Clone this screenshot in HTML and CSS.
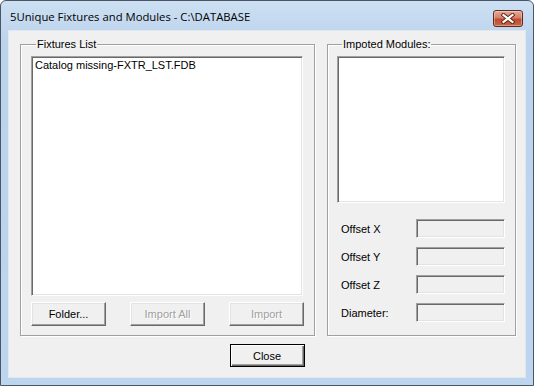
FILE: index.html
```html
<!DOCTYPE html>
<html lang="en">
<head>
  <meta charset="UTF-8">
  <title>5Unique Fixtures and Modules</title>
  <link rel="stylesheet" href="styles.css">
</head>
<body>
  <div class="window">
    <div class="titlebar">
      <span class="title">5Unique Fixtures and Modules - C:\DATABASE</span>
      <button class="close-x" aria-label="Close">
        <svg width="14" height="11" viewBox="0 0 14 11">
          <path d="M2.5 2 L11.5 9 M11.5 2 L2.5 9" stroke="#5a1e14" stroke-width="4" stroke-linecap="square"/>
          <path d="M2.5 2 L11.5 9 M11.5 2 L2.5 9" stroke="#fff" stroke-width="2.2" stroke-linecap="square"/>
        </svg>
      </button>
    </div>
    <div class="client">
      <div class="groups">
        <fieldset class="group fixtures">
          <legend>Fixtures List</legend>
          <div class="listbox big">
            <div class="item">Catalog missing-FXTR_LST.FDB</div>
          </div>
          <div class="btnrow">
            <button class="btn">Folder...</button>
            <button class="btn" disabled>Import All</button>
            <button class="btn" disabled>Import</button>
          </div>
        </fieldset>
        <fieldset class="group modules">
          <legend>Impoted Modules:</legend>
          <div class="listbox small"></div>
          <div class="fields">
            <div class="row"><span>Offset X</span><div class="field"></div></div>
            <div class="row"><span>Offset Y</span><div class="field"></div></div>
            <div class="row"><span>Offset Z</span><div class="field"></div></div>
            <div class="row"><span>Diameter:</span><div class="field"></div></div>
          </div>
        </fieldset>
      </div>
      <div class="bottom">
        <button class="btn default">Close</button>
      </div>
    </div>
  </div>
</body>
</html>
```

FILE: styles.css
```css
* { box-sizing: border-box; }
html, body { margin: 0; padding: 0; }
body {
  width: 534px; height: 386px;
  background: #fff;
  font-family: "Liberation Sans", Arial, sans-serif;
  font-size: 11px;
  color: #000;
}
.window {
  width: 534px; height: 386px;
  border: 1px solid #4a5566;
  border-radius: 6px 6px 0 0;
  background: linear-gradient(#cde0f3, #bcd3ec 40px, #bed5ee);
  padding: 0 7px 7px 7px;
  display: flex;
  flex-direction: column;
}
.titlebar {
  height: 29px;
  display: flex;
  align-items: center;
  justify-content: space-between;
  padding-left: 2px;
}
.title {
  font-family: "Open Sans", "Noto Sans", sans-serif;
  font-size: 11.3px;
  color: #000;
  margin-top: 2px;
}
.close-x {
  width: 30px; height: 17px;
  margin-top: 5px;
  margin-right: 3px;
  padding: 0;
  border: 1px solid #5d2a22;
  border-radius: 3px;
  background: linear-gradient(#e6a898, #d47f6a 45%, #bf4b30 55%, #c9653f);
  box-shadow: inset 0 0 0 1px rgba(255,255,255,0.35);
  display: flex; align-items: center; justify-content: center;
}
.client {
  flex: 1;
  background: #f0f0f0;
  border: 1px solid #dfe7f1;
  display: flex;
  flex-direction: column;
  padding: 7px 11px 0 11px;
}
.groups { display: flex; gap: 12px; }
.group {
  margin: 0;
  border: 1px solid #a0a0a0;
  box-shadow: 1px 1px 0 #fff, inset 1px 1px 0 #fff;
  padding: 0;
  height: 298px;
}
.group legend {
  margin-left: 5px;
  padding: 0 1px;
  line-height: 13px;
}
.fixtures { width: 295px; padding: 5px 10px 0 10px; }
.modules { width: 189px; padding: 5px 10px 0 9px; }
.listbox {
  background: #fff;
  border: 1px solid;
  border-color: #a0a0a0 #fff #fff #a0a0a0;
  box-shadow: inset 1px 1px 0 #696969, inset -1px -1px 0 #e3e3e3;
}
.listbox.big { width: 272px; height: 240px; padding: 2px 3px; }
.listbox.small { width: 168px; height: 147px; }
.item { line-height: 13px; }
.btnrow {
  display: flex;
  justify-content: space-between;
  margin-top: 6px;
  width: 273px;
}
.btn {
  width: 75px; height: 24px;
  font-family: "Liberation Sans", Arial, sans-serif;
  font-size: 11px;
  color: #000;
  background: #f0f0f0;
  border: 1px solid;
  border-color: #fff #696969 #696969 #fff;
  box-shadow: inset -1px -1px 0 #a0a0a0, inset 1px 1px 0 #e3e3e3;
  padding: 0;
}
.btn:disabled { color: #a0a0a0; text-shadow: 1px 1px 0 #fff; }
.btn.default {
  border: 1px solid #000;
  box-shadow: inset 1px 1px 0 #fff, inset -1px -1px 0 #696969, inset -2px -2px 0 #a0a0a0;
  height: 23px;
}
.fields {
  margin-top: 16px;
  display: flex;
  flex-direction: column;
  gap: 9px;
}
.row { display: flex; align-items: center; justify-content: space-between; padding-left: 4px; }
.field {
  width: 89px; height: 19px;
  background: #f0f0f0;
  border: 1px solid;
  border-color: #a0a0a0 #fff #fff #a0a0a0;
  box-shadow: inset 1px 1px 0 #696969, inset -1px -1px 0 #e3e3e3;
}
.bottom {
  display: flex;
  justify-content: center;
  margin-top: 8px;
}
```
